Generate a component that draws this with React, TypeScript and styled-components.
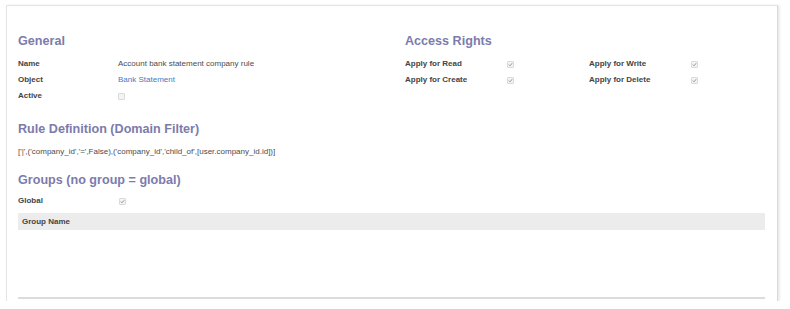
import React from 'react';
import styled, { createGlobalStyle } from 'styled-components';

const GlobalStyle = createGlobalStyle`
  html, body {
    margin: 0;
    padding: 0;
    background: #fff;
  }
  body {
    font-family: "Liberation Sans", Arial, sans-serif;
    color: #4c4c4c;
  }
`;

const Sheet = styled.div`
  margin: 5px 0 0 6px;
  width: 747px;
  height: 268px;
  padding: 27px 12px 0 11px;
  border: 1px solid #e4e4e4;
  border-bottom: none;
  border-right-color: #d8d8d8;
  box-shadow: 2px 0 2px rgba(0, 0, 0, 0.08);
`;

const TopGroup = styled.div`
  display: grid;
  grid-template-columns: 387px 1fr;
`;

const Heading = styled.div<{ $top?: number }>`
  margin-top: ${p => p.$top ?? 0}px;
  font-size: 12.6px;
  line-height: 16px;
  font-weight: bold;
  color: #7c7bad;
`;

const Fields = styled.div<{ $top?: number }>`
  margin-top: ${p => p.$top ?? 7}px;
`;

const Row = styled.div<{ $cols: string }>`
  display: grid;
  grid-template-columns: ${p => p.$cols};
  align-items: center;
  height: 16px;
  font-size: 8px;
  line-height: 16px;
`;

const Label = styled.div`
  font-size: 8px;
  font-weight: bold;
  color: #444;
`;

const Value = styled.div`
  font-size: 8px;
  color: #4c4c4c;
`;

const Link = styled.a`
  font-size: 8px;
  color: #3f7cbf;
  text-decoration: none;
`;

const Cell = styled.div`
  display: flex;
  align-items: center;
  height: 16px;
`;

const Box = styled.span<{ $off?: number }>`
  display: inline-flex;
  align-items: center;
  justify-content: center;
  width: 5px;
  height: 5px;
  margin-left: ${p => p.$off ?? 0}px;
  border: 1px solid #dadada;
  border-radius: 1px;
  background: #f4f4f4;
  svg {
    display: block;
  }
`;

const Domain = styled.div`
  margin-top: 9px;
  font-size: 8px;
  line-height: 12px;
  color: #4c4c4c;
`;

const TableHead = styled.div`
  margin-top: 4px;
  height: 17px;
  display: flex;
  align-items: center;
  padding-left: 4px;
  background: #ececec;
`;

const TableBody = styled.div`
  height: 67px;
  border-bottom: 2px solid #dcdcdc;
`;

const Check: React.FC<{ checked?: boolean; off?: number }> = ({ checked, off }) => (
  <Cell>
    <Box $off={off}>
      {checked && (
        <svg width="5" height="5" viewBox="0 0 5 5">
          <path d="M0.8 2.6 L2 3.8 L4.2 1.2" fill="none" stroke="#8a8a8a" strokeWidth="0.9" />
        </svg>
      )}
    </Box>
  </Cell>
);

const rights = '104px 80px 104px 1fr';

const App: React.FC = () => (
  <>
    <GlobalStyle />
    <Sheet>
      <TopGroup>
        <div>
          <Heading>General</Heading>
          <Fields>
            <Row $cols="100px 1fr">
              <Label>Name</Label>
              <Value>Account bank statement company rule</Value>
            </Row>
            <Row $cols="100px 1fr">
              <Label>Object</Label>
              <Value>
                <Link href="#">Bank Statement</Link>
              </Value>
            </Row>
            <Row $cols="100px 1fr">
              <Label>Active</Label>
              <Check />
            </Row>
          </Fields>
        </div>
        <div>
          <Heading>Access Rights</Heading>
          <Fields>
            <Row $cols={rights}>
              <Label>Apply for Read</Label>
              <Check checked off={-2} />
              <Label>Apply for Write</Label>
              <Check checked off={-2} />
            </Row>
            <Row $cols={rights}>
              <Label>Apply for Create</Label>
              <Check checked off={-2} />
              <Label>Apply for Delete</Label>
              <Check checked off={-2} />
            </Row>
          </Fields>
        </div>
      </TopGroup>

      <Heading $top={17}>Rule Definition (Domain Filter)</Heading>
      <Domain>['|',('company_id','=',False),('company_id','child_of',[user.company_id.id])]</Domain>

      <Heading $top={14}>Groups (no group = global)</Heading>
      <Fields $top={5}>
        <Row $cols="100px 1fr">
          <Label>Global</Label>
          <Check checked off={1} />
        </Row>
      </Fields>
      <TableHead>
        <Label>Group Name</Label>
      </TableHead>
      <TableBody />
    </Sheet>
  </>
);

export default App;
